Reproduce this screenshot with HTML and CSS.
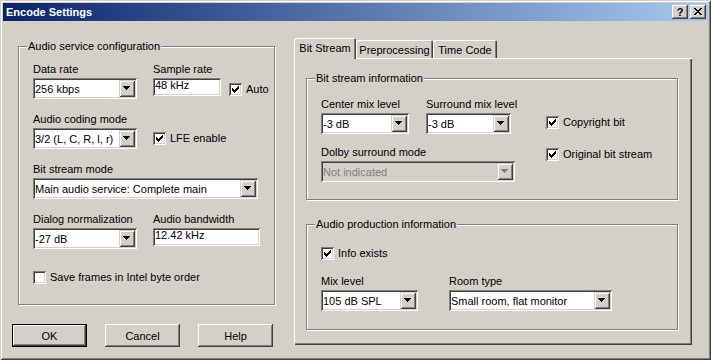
FILE: index.html
```html
<!DOCTYPE html>
<html lang="en">
<head>
    <meta charset="UTF-8">
    <title>Encode Settings</title>
    <link rel="stylesheet" href="styles.css">
</head>
<body>
    <div class="window">
        <div class="titlebar">
            <span class="title">Encode Settings</span>
            <div class="caption-buttons">
                <span class="cap-btn cap-help">?</span>
                <span class="cap-btn"><svg class="cap-x" width="8" height="7" viewBox="0 0 8 7"><path d="M0 0h2v1h-2zM6 0h2v1h-2zM1 1h2v1h-2zM5 1h2v1h-2zM2 2h4v1h-4zM3 3h2v1h-2zM2 4h4v1h-4zM1 5h2v1h-2zM5 5h2v1h-2zM0 6h2v1h-2zM6 6h2v1h-2z"/></svg></span>
            </div>
        </div>

        <div class="client">
            <div class="left-col">
                <div class="group asc">
                    <span class="group-title">Audio service configuration</span>

                    <div class="row">
                        <div class="field">
                            <div class="lbl">Data rate</div>
                            <div class="combo w104"><span class="combo-text">256 kbps</span><span class="drop"><svg width="7" height="4" viewBox="0 0 7 4"><path d="M0 0h7v1h-7zM1 1h5v1h-5zM2 2h3v1h-3zM3 3h1v1h-1z"/></svg></span></div>
                        </div>
                        <div class="field">
                            <div class="lbl">Sample rate</div>
                            <div class="edit w68">48 kHz</div>
                        </div>
                        <div class="check check-auto"><span class="box"><svg width="7" height="7" viewBox="0 0 7 7"><path d="M6 0h1v1h-1zM5 1h2v1h-2zM0 2h1v1h-1zM4 2h3v1h-3zM0 3h2v1h-2zM3 3h3v1h-3zM0 4h5v1h-5zM1 5h3v1h-3zM2 6h1v1h-1z"/></svg></span><span>Auto</span></div>
                    </div>

                    <div class="row">
                        <div class="field">
                            <div class="lbl">Audio coding mode</div>
                            <div class="combo w104"><span class="combo-text">3/2 (L, C, R, l, r)</span><span class="drop"><svg width="7" height="4" viewBox="0 0 7 4"><path d="M0 0h7v1h-7zM1 1h5v1h-5zM2 2h3v1h-3zM3 3h1v1h-1z"/></svg></span></div>
                        </div>
                        <div class="check check-lfe"><span class="box"><svg width="7" height="7" viewBox="0 0 7 7"><path d="M6 0h1v1h-1zM5 1h2v1h-2zM0 2h1v1h-1zM4 2h3v1h-3zM0 3h2v1h-2zM3 3h3v1h-3zM0 4h5v1h-5zM1 5h3v1h-3zM2 6h1v1h-1z"/></svg></span><span>LFE enable</span></div>
                    </div>

                    <div class="row">
                        <div class="field">
                            <div class="lbl">Bit stream mode</div>
                            <div class="combo w225"><span class="combo-text">Main audio service: Complete main</span><span class="drop"><svg width="7" height="4" viewBox="0 0 7 4"><path d="M0 0h7v1h-7zM1 1h5v1h-5zM2 2h3v1h-3zM3 3h1v1h-1z"/></svg></span></div>
                        </div>
                    </div>

                    <div class="row">
                        <div class="field">
                            <div class="lbl">Dialog normalization</div>
                            <div class="combo w104"><span class="combo-text">-27 dB</span><span class="drop"><svg width="7" height="4" viewBox="0 0 7 4"><path d="M0 0h7v1h-7zM1 1h5v1h-5zM2 2h3v1h-3zM3 3h1v1h-1z"/></svg></span></div>
                        </div>
                        <div class="field">
                            <div class="lbl">Audio bandwidth</div>
                            <div class="edit w107">12.42 kHz</div>
                        </div>
                    </div>

                    <div class="check check-save"><span class="box"></span><span>Save frames in Intel byte order</span></div>
                </div>

                <div class="buttons">
                    <div class="btn default">OK</div>
                    <div class="btn">Cancel</div>
                    <div class="btn">Help</div>
                </div>
            </div>

            <div class="right-col">
                <div class="tabs">
                    <div class="tab active t-bit">Bit Stream</div>
                    <div class="tab t-pre">Preprocessing</div>
                    <div class="tab t-time">Time Code</div>
                </div>
                <div class="panel">
                    <div class="group bsi">
                        <span class="group-title">Bit stream information</span>
                        <div class="bs-grid">
                            <div class="field">
                                <div class="lbl">Center mix level</div>
                                <div class="combo w88"><span class="combo-text">-3 dB</span><span class="drop"><svg width="7" height="4" viewBox="0 0 7 4"><path d="M0 0h7v1h-7zM1 1h5v1h-5zM2 2h3v1h-3zM3 3h1v1h-1z"/></svg></span></div>
                            </div>
                            <div class="field">
                                <div class="lbl">Surround mix level</div>
                                <div class="combo w85"><span class="combo-text">-3 dB</span><span class="drop"><svg width="7" height="4" viewBox="0 0 7 4"><path d="M0 0h7v1h-7zM1 1h5v1h-5zM2 2h3v1h-3zM3 3h1v1h-1z"/></svg></span></div>
                            </div>
                            <div class="check check-copy"><span class="box"><svg width="7" height="7" viewBox="0 0 7 7"><path d="M6 0h1v1h-1zM5 1h2v1h-2zM0 2h1v1h-1zM4 2h3v1h-3zM0 3h2v1h-2zM3 3h3v1h-3zM0 4h5v1h-5zM1 5h3v1h-3zM2 6h1v1h-1z"/></svg></span><span>Copyright bit</span></div>

                            <div class="field span2">
                                <div class="lbl">Dolby surround mode</div>
                                <div class="combo w194 disabled"><span class="combo-text">Not indicated</span><span class="drop"><svg width="7" height="4" viewBox="0 0 7 4"><path d="M0 0h7v1h-7zM1 1h5v1h-5zM2 2h3v1h-3zM3 3h1v1h-1z"/></svg></span></div>
                            </div>
                            <div class="check check-orig"><span class="box"><svg width="7" height="7" viewBox="0 0 7 7"><path d="M6 0h1v1h-1zM5 1h2v1h-2zM0 2h1v1h-1zM4 2h3v1h-3zM0 3h2v1h-2zM3 3h3v1h-3zM0 4h5v1h-5zM1 5h3v1h-3zM2 6h1v1h-1z"/></svg></span><span>Original bit stream</span></div>
                        </div>
                    </div>

                    <div class="group api">
                        <span class="group-title">Audio production information</span>
                        <div class="check"><span class="box"><svg width="7" height="7" viewBox="0 0 7 7"><path d="M6 0h1v1h-1zM5 1h2v1h-2zM0 2h1v1h-1zM4 2h3v1h-3zM0 3h2v1h-2zM3 3h3v1h-3zM0 4h5v1h-5zM1 5h3v1h-3zM2 6h1v1h-1z"/></svg></span><span>Info exists</span></div>
                        <div class="row api-row">
                            <div class="field">
                                <div class="lbl">Mix level</div>
                                <div class="combo w97"><span class="combo-text">105 dB SPL</span><span class="drop"><svg width="7" height="4" viewBox="0 0 7 4"><path d="M0 0h7v1h-7zM1 1h5v1h-5zM2 2h3v1h-3zM3 3h1v1h-1z"/></svg></span></div>
                            </div>
                            <div class="field room">
                                <div class="lbl">Room type</div>
                                <div class="combo w163"><span class="combo-text">Small room, flat monitor</span><span class="drop"><svg width="7" height="4" viewBox="0 0 7 4"><path d="M0 0h7v1h-7zM1 1h5v1h-5zM2 2h3v1h-3zM3 3h1v1h-1z"/></svg></span></div>
                            </div>
                        </div>
                    </div>
                </div>
            </div>
        </div>
    </div>
</body>
</html>
```

FILE: styles.css
```css
* {
    box-sizing: border-box;
}
body {
    margin: 0;
    font-family: "Liberation Sans", Arial, sans-serif;
    font-size: 11px;
    color: #000;
    background: #d4d0c8;
}
.window {
    width: 711px;
    height: 360px;
    padding: 3px;
    background: #d4d0c8;
    box-shadow: inset 1px 1px #d4d0c8, inset -1px -1px #404040, inset 2px 2px #fff, inset -2px -2px #808080;
}

/* title bar */
.titlebar {
    display: flex;
    align-items: center;
    height: 18px;
    padding: 0 2px 0 3px;
    background: linear-gradient(to right, #0a246a, #a6caf0);
    color: #fff;
}
.title {
    font-weight: bold;
    line-height: 13px;
}
.caption-buttons {
    display: flex;
    gap: 2px;
    margin-left: auto;
}
.cap-btn {
    display: block;
    width: 16px;
    height: 14px;
    background: #d4d0c8;
    color: #000;
    box-shadow: inset -1px -1px #404040, inset 1px 1px #fff, inset -2px -2px #808080;
}
.cap-help {
    font-weight: bold;
    text-align: center;
    line-height: 14px;
}
.cap-x {
    display: block;
    margin: 3px 0 0 4px;
}

/* layout */
.client {
    display: flex;
    padding-top: 17px;
}
.left-col {
    padding: 8px 0 0 9px;
}
.right-col {
    margin-left: 19px;
    width: 398px;
}

/* group boxes */
.group {
    position: relative;
    border: 1px solid #808080;
    box-shadow: inset 1px 1px #fff, 1px 1px #fff;
}
.group-title {
    position: absolute;
    top: -7px;
    left: 8px;
    padding: 0 1px;
    line-height: 13px;
    background: #d4d0c8;
    white-space: nowrap;
}
.asc {
    margin-left: 6px;
    width: 257px;
    height: 259px;
    padding: 16px 0 0 14px;
}
.row {
    display: flex;
    align-items: flex-start;
    margin-bottom: 14px;
}
.field + .field {
    margin-left: 16px;
}
.lbl {
    line-height: 13px;
    margin-bottom: 2px;
    white-space: nowrap;
}

/* combo boxes and edits */
.combo {
    display: flex;
    height: 21px;
    padding: 2px;
    background: #fff;
    box-shadow: inset 1px 1px #808080, inset -1px -1px #fff, inset 2px 2px #404040, inset -2px -2px #d4d0c8;
}
.combo-text {
    flex: 1;
    padding-top: 2px;
    line-height: 15px;
    white-space: nowrap;
    overflow: hidden;
}
.drop {
    display: block;
    width: 16px;
    height: 17px;
    background: #d4d0c8;
    box-shadow: inset 1px 1px #d4d0c8, inset -1px -1px #404040, inset 2px 2px #fff, inset -2px -2px #808080;
}
.drop svg {
    display: block;
    margin: 6px 0 0 4px;
}
.combo.disabled {
    background: #d4d0c8;
    color: #808080;
}
.combo.disabled .drop svg {
    fill: #808080;
}
.edit {
    height: 18px;
    padding: 1px 2px 0;
    line-height: 13px;
    background: #fff;
    white-space: nowrap;
    box-shadow: inset 1px 1px #808080, inset -1px -1px #fff, inset 2px 2px #404040, inset -2px -2px #d4d0c8;
}
.w68 { width: 68px; }
.w85 { width: 85px; }
.w88 { width: 88px; }
.w97 { width: 97px; }
.w104 { width: 104px; }
.w107 { width: 107px; }
.w163 { width: 163px; }
.w194 { width: 194px; }
.w225 { width: 225px; }

/* check boxes */
.check {
    display: flex;
    align-items: center;
    line-height: 13px;
    white-space: nowrap;
}
.box {
    display: block;
    width: 13px;
    height: 13px;
    margin-right: 4px;
    background: #fff;
    box-shadow: inset 1px 1px #808080, inset -1px -1px #fff, inset 2px 2px #404040, inset -2px -2px #d4d0c8;
}
.box svg {
    display: block;
    margin: 3px 0 0 3px;
}
.check-auto {
    align-self: flex-end;
    margin: 0 0 3px 8px;
}
.check-lfe {
    align-self: flex-end;
    margin: 0 0 4px 16px;
}
.check-save {
    margin-top: 22px;
}

/* dialog buttons */
.buttons {
    display: flex;
    gap: 18px;
    margin-top: 19px;
}
.btn {
    display: flex;
    align-items: center;
    justify-content: center;
    width: 75px;
    height: 23px;
    background: #d4d0c8;
    box-shadow: inset -1px -1px #404040, inset 1px 1px #fff, inset -2px -2px #808080, inset 2px 2px #d4d0c8;
}
.btn.default {
    border: 1px solid #000;
}

/* tabs */
.tabs {
    display: flex;
    align-items: flex-end;
    height: 20px;
}
.tab {
    height: 18px;
    padding-top: 4px;
    line-height: 13px;
    text-align: center;
    white-space: nowrap;
    border-radius: 2px 2px 0 0;
    box-shadow: inset 1px 1px #fff, inset -1px 0 #404040, inset -2px 0 #808080;
}
.tab.active {
    position: relative;
    z-index: 1;
    height: 21px;
    margin-bottom: -1px;
    background: #d4d0c8;
}
.t-bit { width: 62px; }
.t-pre { width: 77px; }
.t-time { width: 64px; }
.panel {
    height: 287px;
    padding: 20px 0 0 12px;
    box-shadow: inset 1px 1px #fff, inset -1px -1px #404040, inset -2px -2px #808080;
}
.bsi {
    width: 372px;
    height: 122px;
    padding: 19px 0 0 14px;
}
.bs-grid {
    display: grid;
    grid-template-columns: 105px 120px auto;
    row-gap: 12px;
}
.span2 {
    grid-column: 1 / span 2;
}
.bs-grid .field + .field {
    margin-left: 0;
}
.check-copy {
    align-self: end;
    margin-bottom: 5px;
}
.check-orig {
    align-self: start;
    margin-top: 2px;
}
.api {
    width: 372px;
    height: 106px;
    margin-top: 24px;
    padding: 22px 0 0 14px;
}
.api-row {
    margin-top: 15px;
}
.field.room {
    margin-left: 31px;
}
```
